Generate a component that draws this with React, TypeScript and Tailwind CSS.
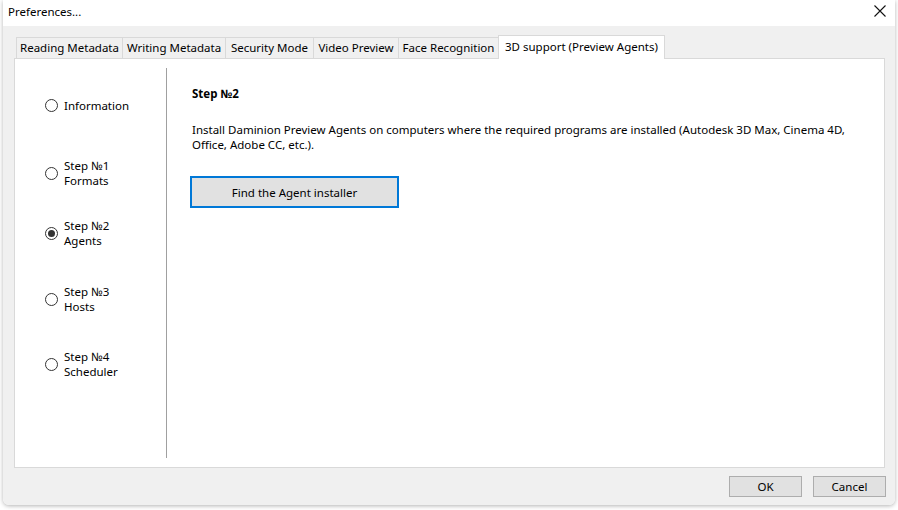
import { useState } from 'react';

const TABS = [
  { label: 'Reading Metadata', w: 'w-[107px]' },
  { label: 'Writing Metadata', w: 'w-[104px]' },
  { label: 'Security Mode', w: 'w-[89px]' },
  { label: 'Video Preview', w: 'w-[86px]' },
  { label: 'Face Recognition', w: 'w-[101px]' },
];

const STEPS = [
  { id: 'info', lines: ['Information'], mt: 'mt-[30px]' },
  { id: 's1', lines: ['Step №1', 'Formats'], mt: 'mt-[45px]' },
  { id: 's2', lines: ['Step №2', 'Agents'], mt: 'mt-[30px]' },
  { id: 's3', lines: ['Step №3', 'Hosts'], mt: 'mt-[36px]' },
  { id: 's4', lines: ['Step №4', 'Scheduler'], mt: 'mt-[35px]' },
];

function Radio({ checked }: { checked: boolean }) {
  return (
    <span className="w-[13px] h-[13px] rounded-full border border-[#333] bg-white flex items-center justify-center shrink-0">
      {checked && <span className="w-[7px] h-[7px] rounded-full bg-[#333]" />}
    </span>
  );
}

export default function App() {
  const [step, setStep] = useState('s2');

  return (
    <div className="w-[898px] h-[510px] bg-white text-[11.5px] leading-[15px] text-black" style={{ fontFamily: '"Noto Sans", "Open Sans", sans-serif' }}>
      <div className="ml-[3px] w-[892px] h-[505px] rounded-b-[6px] shadow-[0_1px_4px_rgba(0,0,0,0.3)] flex flex-col overflow-hidden">
        {/* title bar */}
        <div className="h-[26px] bg-white flex items-center justify-between pl-[5px] pr-[9px] shrink-0">
          <span className="-mt-[4px]">Preferences...</span>
          <svg width="12" height="12" viewBox="0 0 12 12" className="-mt-[4px]">
            <path d="M0.5 0.5 L11.5 11.5 M11.5 0.5 L0.5 11.5" stroke="#111" strokeWidth="1.1" />
          </svg>
        </div>

        {/* body */}
        <div className="flex-1 bg-[#f0f0f0] flex flex-col px-[11px] pt-[9px]">
          <div className="flex items-end pl-[2px] h-[23px]">
            {TABS.map(t => (
              <div key={t.label} className={`${t.w} h-[21px] border border-[#d9d9d9] border-b-0 -ml-px first:ml-0 bg-[#f0f0f0] flex items-center justify-center whitespace-nowrap pb-px`}>
                {t.label}
              </div>
            ))}
            <div className="w-[167px] h-[24px] -ml-px border border-[#d9d9d9] border-b-0 bg-white relative z-10 -mb-px flex items-start justify-center pt-[3px] whitespace-nowrap">
              3D support (Preview Agents)
            </div>
          </div>

          <div className="w-[871px] h-[410px] bg-white border border-[#d9d9d9] flex py-[9px]">
            <div className="w-[152px] border-r border-[#a0a0a0] flex flex-col pl-[30px]">
              {STEPS.map(s => (
                <label key={s.id} className={`${s.mt} flex items-center gap-[6px] cursor-default`} onClick={() => setStep(s.id)}>
                  <Radio checked={step === s.id} />
                  <span className="flex flex-col">
                    {s.lines.map(l => <span key={l} className="block h-[15px]">{l}</span>)}
                  </span>
                </label>
              ))}
            </div>

            <div className="flex-1 pl-[25px] pt-[18px] pr-[20px]">
              <div className="font-bold">Step №2</div>
              <p className="mt-[21px] text-[#000]">
                Install Daminion Preview Agents on computers where the required programs are installed (Autodesk 3D Max, Cinema 4D, Office, Adobe CC, etc.).
              </p>
              <button className="mt-[24px] -ml-[2px] w-[209px] h-[32px] bg-[#e1e1e1] border-2 border-[#0078d7] flex items-center justify-center">
                Find the Agent installer
              </button>
            </div>
          </div>

          <div className="flex justify-end gap-[11px] pt-[8px] -mr-[2px]">
            <button className="w-[73px] h-[21px] bg-[#e1e1e1] border border-[#adadad] flex items-center justify-center">OK</button>
            <button className="w-[73px] h-[21px] bg-[#e1e1e1] border border-[#adadad] flex items-center justify-center">Cancel</button>
          </div>
        </div>
      </div>
    </div>
  );
}
